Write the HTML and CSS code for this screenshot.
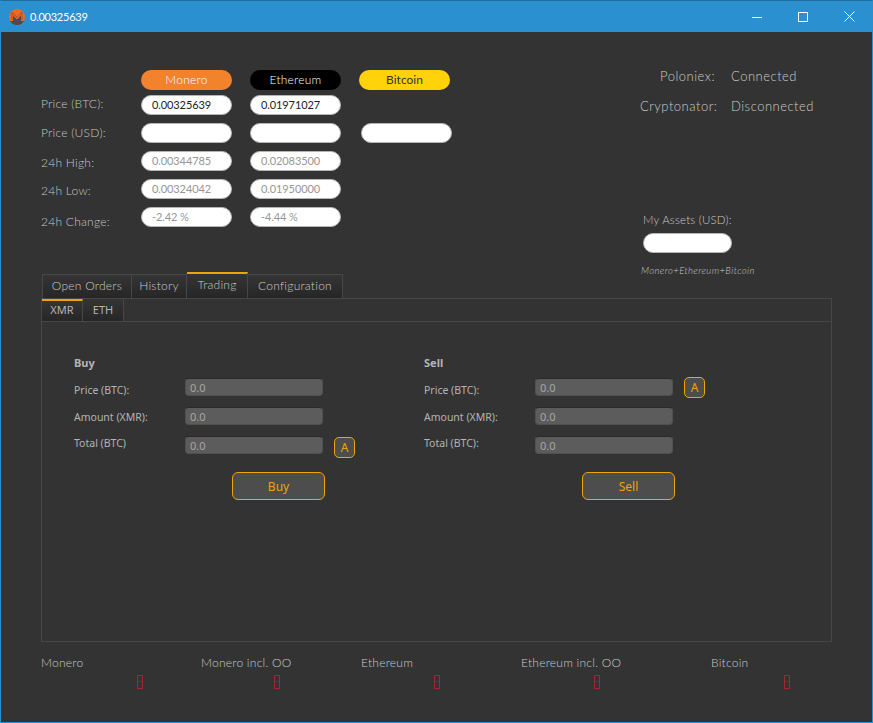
FILE: index.html
```html
<!DOCTYPE html>
<html lang="en">
<head>
<meta charset="utf-8">
<title>0.00325639</title>
<link rel="stylesheet" href="styles.css">
</head>
<body>
<div class="window">
  <header class="titlebar">
    <svg class="logo" width="16" height="16" viewBox="0 0 16 16"><circle cx="8" cy="8" r="8" fill="#f26822"/><path d="M1 12h3V6.5l4 4 4-4V12h3a8 8 0 0 1-14 0z" fill="#4c4c4c"/><path d="M3 11V3.2l5 5 5-5V11" fill="none" stroke="#5b4a40" stroke-width=".6"/></svg>
    <span class="title">0.00325639</span>
    <div class="controls">
      <span class="control"><svg width="10" height="10" viewBox="0 0 10 10"><path d="M0 5.5h10" stroke="#fff"/></svg></span>
      <span class="control"><svg width="10" height="10" viewBox="0 0 10 10"><rect x=".5" y=".5" width="9" height="9" fill="none" stroke="#fff"/></svg></span>
      <span class="control"><svg width="11" height="11" viewBox="0 0 11 11"><path d="M.5.5l10 10M10.5.5l-10 10" stroke="#fff"/></svg></span>
    </div>
  </header>
  <main class="content">
    <section class="top">
      <div class="market">
        <div class="coins">
          <span class="coin coin-xmr">Monero</span>
          <span class="coin coin-eth">Ethereum</span>
          <span class="coin coin-btc">Bitcoin</span>
        </div>
        <div class="prices">
          <span class="label label-up">Price (BTC):</span><span class="pill pill-live">0.00325639</span><span class="pill pill-live">0.01971027</span><span></span>
          <span class="label">Price (USD):</span><span class="pill"></span><span class="pill"></span><span class="pill pill-btc"></span>
          <span class="label label-down">24h High:</span><span class="pill">0.00344785</span><span class="pill">0.02083500</span><span></span>
          <span class="label label-down">24h Low:</span><span class="pill">0.00324042</span><span class="pill">0.01950000</span><span></span>
          <span class="label label-low">24h Change:</span><span class="pill">-2.42 %</span><span class="pill">-4.44 %</span><span></span>
        </div>
      </div>
      <aside class="side">
        <div class="status">
          <span class="status-name">Poloniex:</span><span>Connected</span>
          <span class="status-name">Cryptonator:</span><span>Disconnected</span>
        </div>
        <div class="assets">
          <div class="assets-label">My Assets (USD):</div>
          <div class="pill assets-pill"></div>
          <div class="assets-note">Monero+Ethereum+Bitcoin</div>
        </div>
      </aside>
    </section>

    <nav class="tabs">
      <span class="tab tab-orders">Open Orders</span>
      <span class="tab tab-history">History</span>
      <span class="tab tab-trading active">Trading</span>
      <span class="tab tab-config">Configuration</span>
    </nav>
    <section class="panel">
      <nav class="subtabs">
        <span class="subtab active">XMR</span>
        <span class="subtab">ETH</span>
      </nav>
      <div class="trade">
        <form class="order">
          <h2 class="order-title">Buy</h2>
          <div class="order-grid">
            <span class="field-label lower">Price (BTC):</span><span class="input">0.0</span><span></span>
            <span class="field-label low">Amount (XMR):</span><span class="input">0.0</span><span></span>
            <span class="field-label">Total (BTC)</span><span class="input">0.0</span><span class="auto auto-down">A</span>
          </div>
          <button class="action" type="button">Buy</button>
        </form>
        <form class="order">
          <h2 class="order-title">Sell</h2>
          <div class="order-grid">
            <span class="field-label lower">Price (BTC):</span><span class="input">0.0</span><span class="auto auto-up">A</span>
            <span class="field-label low">Amount (XMR):</span><span class="input">0.0</span><span></span>
            <span class="field-label">Total (BTC):</span><span class="input">0.0</span><span></span>
          </div>
          <button class="action" type="button">Sell</button>
        </form>
      </div>
    </section>

    <footer class="balances">
      <div class="balance"><div class="balance-name">Monero</div><div class="led led-wide"></div></div>
      <div class="balance"><div class="balance-name">Monero incl. OO</div><div class="led"></div></div>
      <div class="balance"><div class="balance-name">Ethereum</div><div class="led"></div></div>
      <div class="balance"><div class="balance-name">Ethereum incl. OO</div><div class="led"></div></div>
      <div class="balance"><div class="balance-name">Bitcoin</div><div class="led"></div></div>
    </footer>
  </main>
</div>
</body>
</html>
```
FILE: styles.css
```css
* { box-sizing: border-box; }
html, body { margin: 0; padding: 0; }
body { width: 873px; height: 723px; overflow: hidden; background: #2b90d0; font-family: Lato, "Liberation Sans", sans-serif; }

.window { width: 873px; height: 723px; display: flex; flex-direction: column; border: 1px solid #2b90d0; border-top-color: #1f6d9e; }

.titlebar { height: 31px; flex: none; display: flex; align-items: center; padding-left: 8px; color: #fff; background: #2b90d0; }
.logo { flex: none; }
.title { margin-left: 5px; font-size: 11px; letter-spacing: -.25px; }
.controls { margin-left: auto; display: flex; }
.control { width: 46px; height: 31px; display: flex; align-items: center; justify-content: center; }

.content { flex: 1; background: #333; color: #cacaca; padding: 0 40px; font-size: 12px; font-weight: 300; letter-spacing: .25px; }

.top { height: 242px; display: flex; padding-top: 38px; }
.market { width: 600px; }
.coins { display: flex; gap: 18px; padding-left: 100px; margin-bottom: 5px; }
.coin { width: 91px; height: 20px; line-height: 20px; border-radius: 10px; text-align: center; }
.coin-xmr { background: #f2822c; color: #fff; }
.coin-eth { background: #000; color: #fff; }
.coin-btc { background: #ffd20a; color: #333; font-weight: 400; letter-spacing: 0; }

.prices { display: grid; grid-template-columns: 82px 91px 91px 93px; column-gap: 18px; row-gap: 8px; grid-auto-rows: 20px; }
.prices .label { line-height: 20px; color: #c6c6c6; white-space: nowrap; }
.prices .label-up { margin-top: -1px; }
.prices .label-down { padding-top: 2px; }
.prices .label-low { padding-top: 5px; }
.pill { display: block; height: 20px; line-height: 18px; padding: 0 10px; background: #fff; border: 1px solid #b5b5b5; border-radius: 10px; color: #969696; font-size: 11px; font-weight: 400; letter-spacing: -.1px; white-space: nowrap; }
.pill-live { color: #222; }
.pill-btc { margin-left: 2px; }

.side { flex: 1; margin-left: -1px; }
.status { display: grid; grid-template-columns: 75px auto; column-gap: 16px; grid-auto-rows: 30px; margin-top: -9px; font-size: 13px; letter-spacing: .5px; line-height: 30px; }
.status-name { text-align: right; white-space: nowrap; }
.assets { margin-top: 90px; padding-left: 3px; }
.assets-label { height: 18px; font-size: 11.5px; line-height: 18px; letter-spacing: .2px; white-space: nowrap; }
.assets-pill { width: 89px; margin-top: 4px; }
.assets-note { margin: 12px 0 0 -2px; font-size: 9.5px; font-style: italic; line-height: 12px; letter-spacing: .4px; white-space: nowrap; }

.tabs { display: flex; height: 24px; padding-left: 1px; }
.tab { height: 24px; padding-top: 3px; border: 1px solid #474747; border-bottom: 0; border-left: 0; background: linear-gradient(#353535, #262626); text-align: center; }
.tab-orders { width: 90px; border-left: 1px solid #474747; }
.tab-history { width: 55px; }
.tab-trading { width: 61px; }
.tab-config { width: 95px; }
.tab.active { height: 26px; margin-top: -2px; padding-top: 3px; border-top: 2px solid #f0a30a; }

.panel { height: 344px; border: 1px solid #474747; }
.subtabs { display: flex; height: 23px; border-bottom: 1px solid #474747; }
.subtab { width: 41px; height: 22px; padding-top: 3px; border-right: 1px solid #474747; background: linear-gradient(#353535, #262626); color: #b4b4b4; font-family: "Noto Sans", sans-serif; font-size: 11px; font-weight: 400; letter-spacing: 0; text-align: center; }
.subtab.active { border-top: 2px solid #f0a30a; padding-top: 1px; }

.trade { display: flex; padding: 34px 0 0 32px; color: #b4b4b4; font-family: "Noto Sans", sans-serif; font-weight: 400; letter-spacing: 0; }
.order { width: 350px; }
.order-title { margin: 0 0 8px; font-size: 11px; font-weight: 700; line-height: 14px; color: #b4b4b4; }
.order-grid { display: grid; grid-template-columns: 111px 138px 21px; grid-auto-rows: 18px; row-gap: 11px; }
.field-label { font-size: 10.5px; line-height: 14px; white-space: nowrap; }
.field-label.lower { padding-top: 5px; }
.field-label.low { padding-top: 3px; }
.input { height: 18px; line-height: 18px; padding-left: 4px; background: #5c5c5c; border: 1px solid #505050; border-top-color: #2a2a2a; border-radius: 4px; color: #a6a6a6; font-size: 11px; }
.auto { width: 21px; height: 21px; margin-left: 11px; border: 1px solid #f0a30a; border-radius: 5px; background: #4d4d4d; color: #f0a30a; font-size: 12px; line-height: 19px; text-align: center; }
.auto-down { margin-top: 1px; }
.auto-up { margin-top: -1px; }
.action { display: block; width: 93px; height: 28px; margin: 18px 0 0 158px; padding: 0; border: 1px solid #f0a30a; border-radius: 6px; background: #4d4d4d; color: #f0a30a; font: 12px "Noto Sans", sans-serif; }

.balances { display: grid; grid-template-columns: 160px 160px 160px 190px 120px; margin-top: 13px; }
.balance-name { line-height: 16px; white-space: nowrap; }
.led { position: relative; width: 6px; height: 14px; margin: 4px 0 0 73px; border: 1px solid #a02535; }
.led::after { content: ""; position: absolute; left: 0; right: 0; top: 5px; height: 1px; background: #7a2a35; }
.led-wide { margin-left: 96px; }
```
